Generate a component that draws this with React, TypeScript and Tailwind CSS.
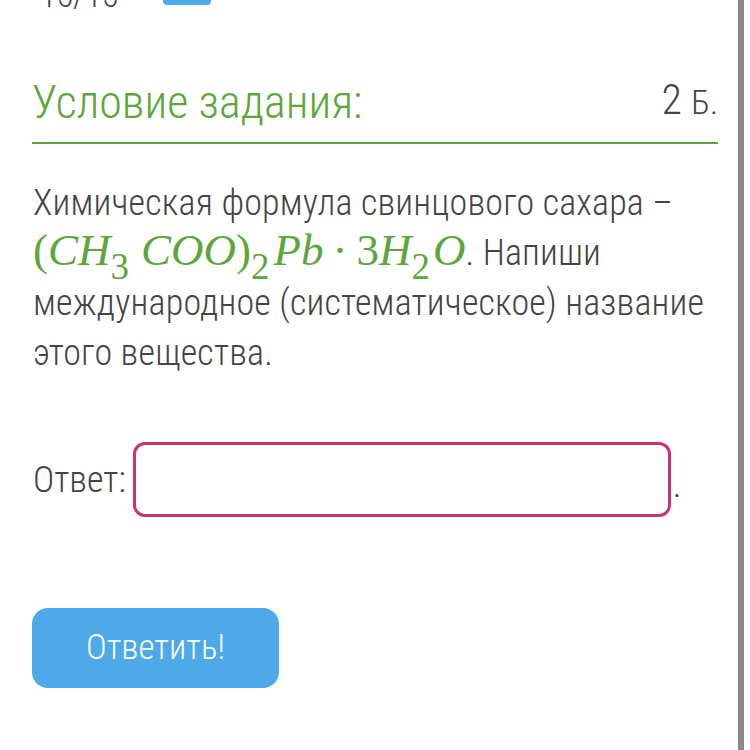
import React from "react";

function Sub({ children }: { children: React.ReactNode }) {
  return (
    <span className="text-[37px] relative top-[14px] not-italic leading-none">{children}</span>
  );
}

export default function App() {
  const sans = { fontFamily: '"Roboto Condensed Light", "Roboto Condensed", "Roboto Light", Roboto, "Liberation Sans", sans-serif' };
  return (
    <div className="w-[750px] h-[750px] bg-white flex overflow-hidden" style={sans}>
      <div className="flex-1 flex flex-col relative">
        <div className="absolute left-[40px] top-[-22px] text-[34px] font-light text-[#444] leading-none">15/15</div>
        <div className="absolute left-[163px] top-[-10px] w-[48px] h-[15px] rounded bg-[#4da9e8]"></div>
        <div className="ml-[32px] mr-[20px] mt-[72px] pb-[12px] border-b-2 border-[#5da53d] flex items-end justify-between">
          <span className="text-[46px] font-light text-[#5da53d] leading-[56px]">Условие задания:</span>
          <span className="text-[42px] font-light text-[#444] leading-[56px]">2 <span className="text-[34px]">Б.</span></span>
        </div>
        <div className="ml-[33px] mr-[24px] mt-[34px] text-[36px] tracking-[0.2px] font-light text-[#444] leading-[50px]">
          Химическая формула свинцового сахара –{" "}
          <span className="text-[#5da53d] text-[45px] leading-[40px] tracking-normal" style={{ fontFamily: '"Liberation Serif", serif' }}>
            (<i>CH</i><Sub>3</Sub><span className="inline-block w-[12px]"></span><i>COO</i>)<Sub>2</Sub><span className="inline-block w-[4px]"></span><i>Pb</i><span className="inline-block w-[9px]"></span>·<span className="inline-block w-[9px]"></span>3<i>H</i><Sub>2</Sub><span className="inline-block w-[3px]"></span><i>O</i>
          </span>
          . Напиши международное (систематическое) название этого вещества.
        </div>
        <div className="ml-[33px] mt-[64px] flex items-center">
          <span className="text-[36px] font-light text-[#444]">Ответ:</span>
          <div className="ml-[7px] w-[538px] h-[75px] border-[3px] border-[#c8336f] rounded-[12px] bg-white"></div>
          <span className="text-[36px] font-light text-[#444] self-end mb-[14px] ml-[2px] leading-none">.</span>
        </div>
        <div className="ml-[32px] mt-[91px] w-[247px] h-[80px] rounded-[16px] bg-[#4da9e8] flex items-center justify-center">
          <span className="text-[35px] font-light text-white">Ответить!</span>
        </div>
      </div>
      <div className="w-[6px] bg-[#8a8a8a]"></div>
      <div className="w-[6px] bg-white"></div>
    </div>
  );
}
